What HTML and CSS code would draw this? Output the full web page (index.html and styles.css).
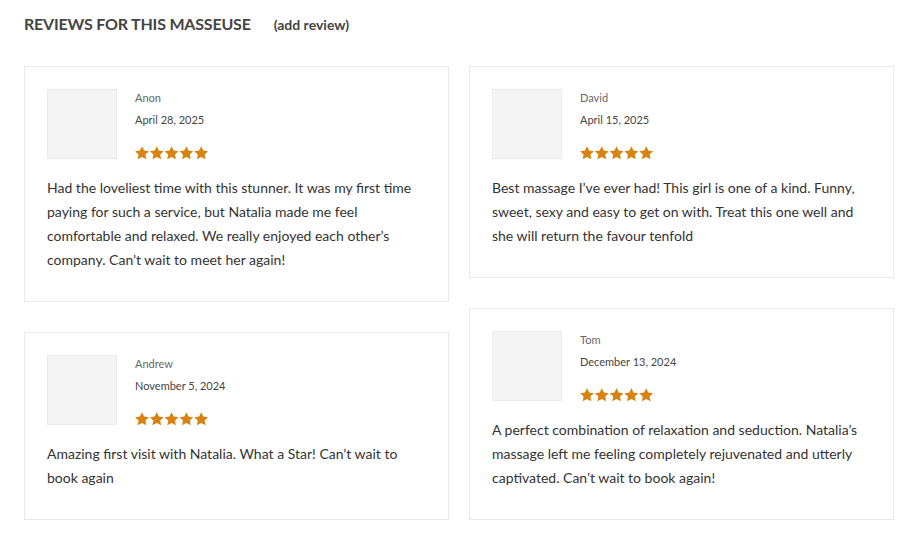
FILE: index.html
```html
<!DOCTYPE html>
<html>
<head>
<meta charset="utf-8">
<link rel="stylesheet" href="styles.css">
</head>
<body>
<div class="page">
  <div class="heading">
    <h2 class="title">REVIEWS FOR THIS MASSEUSE</h2>
    <a class="add">(add review)</a>
  </div>
  <div class="columns">
    <div class="col">
      <div class="card">
        <div class="head">
          <div class="avatar"></div>
          <div class="meta">
            <div class="name">Anon</div>
            <div class="date">April 28, 2025</div>
            <svg class="stars" width="74" height="14" viewBox="0 0 74 14"><g fill="#d8820f"><path id="s" d="M7 0.2l2.1 4.3 4.8 0.65-3.5 3.3 0.9 4.75L7 10.95 2.7 13.2l0.9-4.75L0.1 5.15l4.8-0.65z"/><use href="#s" x="14.8"/><use href="#s" x="29.6"/><use href="#s" x="44.4"/><use href="#s" x="59.2"/></g></svg>
          </div>
        </div>
        <p class="text">Had the loveliest time with this stunner. It was my first time paying for such a service, but Natalia made me feel comfortable and relaxed. We really enjoyed each other’s company. Can’t wait to meet her again!</p>
      </div>
      <div class="card">
        <div class="head">
          <div class="avatar"></div>
          <div class="meta">
            <div class="name">Andrew</div>
            <div class="date">November 5, 2024</div>
            <svg class="stars" width="74" height="14" viewBox="0 0 74 14"><g fill="#d8820f"><use href="#s"/><use href="#s" x="14.8"/><use href="#s" x="29.6"/><use href="#s" x="44.4"/><use href="#s" x="59.2"/></g></svg>
          </div>
        </div>
        <p class="text">Amazing first visit with Natalia. What a Star! Can’t wait to book again</p>
      </div>
    </div>
    <div class="col">
      <div class="card">
        <div class="head">
          <div class="avatar"></div>
          <div class="meta">
            <div class="name">David</div>
            <div class="date">April 15, 2025</div>
            <svg class="stars" width="74" height="14" viewBox="0 0 74 14"><g fill="#d8820f"><use href="#s"/><use href="#s" x="14.8"/><use href="#s" x="29.6"/><use href="#s" x="44.4"/><use href="#s" x="59.2"/></g></svg>
          </div>
        </div>
        <p class="text">Best massage I’ve ever had! This girl is one of a kind. Funny, sweet, sexy and easy to get on with. Treat this one well and she will return the favour tenfold</p>
      </div>
      <div class="card">
        <div class="head">
          <div class="avatar"></div>
          <div class="meta">
            <div class="name">Tom</div>
            <div class="date">December 13, 2024</div>
            <svg class="stars" width="74" height="14" viewBox="0 0 74 14"><g fill="#d8820f"><use href="#s"/><use href="#s" x="14.8"/><use href="#s" x="29.6"/><use href="#s" x="44.4"/><use href="#s" x="59.2"/></g></svg>
          </div>
        </div>
        <p class="text">A perfect combination of relaxation and seduction. Natalia’s massage left me feeling completely rejuvenated and utterly captivated. Can’t wait to book again!</p>
      </div>
    </div>
  </div>
</div>
</body>
</html>
```

FILE: styles.css
```css
html, body {
  margin: 0;
  padding: 0;
  background: #fff;
}
body {
  font-family: Lato, "Open Sans", sans-serif;
  color: #444;
}
.page {
  padding: 14px 0 0 24px;
}
.heading {
  display: flex;
  align-items: baseline;
  height: 20px;
}
.title {
  margin: 0;
  font-size: 16px;
  font-weight: 700;
  line-height: 20px;
  color: #444;
  letter-spacing: -0.2px;
}
.add {
  margin-left: 23px;
  font-size: 14px;
  font-weight: 700;
  color: #444;
  text-decoration: none;
}
.columns {
  display: flex;
  gap: 20px;
  margin-top: 32px;
  align-items: flex-start;
}
.col {
  width: 425px;
  display: flex;
  flex-direction: column;
  gap: 30px;
}
.card {
  border: 1px solid #e8e8e8;
  padding: 22px 22px 29px 22px;
}
.head {
  display: flex;
}
.avatar {
  width: 68px;
  height: 68px;
  background: #f4f4f4;
  border: 1px solid #ebebeb;
  flex: none;
}
.meta {
  margin-left: 18px;
  display: flex;
  flex-direction: column;
}
.name {
  font-size: 11px;
  line-height: 18px;
  color: #666;
}
.date {
  font-size: 11px;
  line-height: 18px;
  margin-top: 4px;
  color: #444;
}
.stars {
  display: block;
  margin-top: 17px;
}
.text {
  margin: 16px 0 0 0;
  font-size: 14px;
  line-height: 24px;
  color: #333;
  max-width: 380px;
}
```
